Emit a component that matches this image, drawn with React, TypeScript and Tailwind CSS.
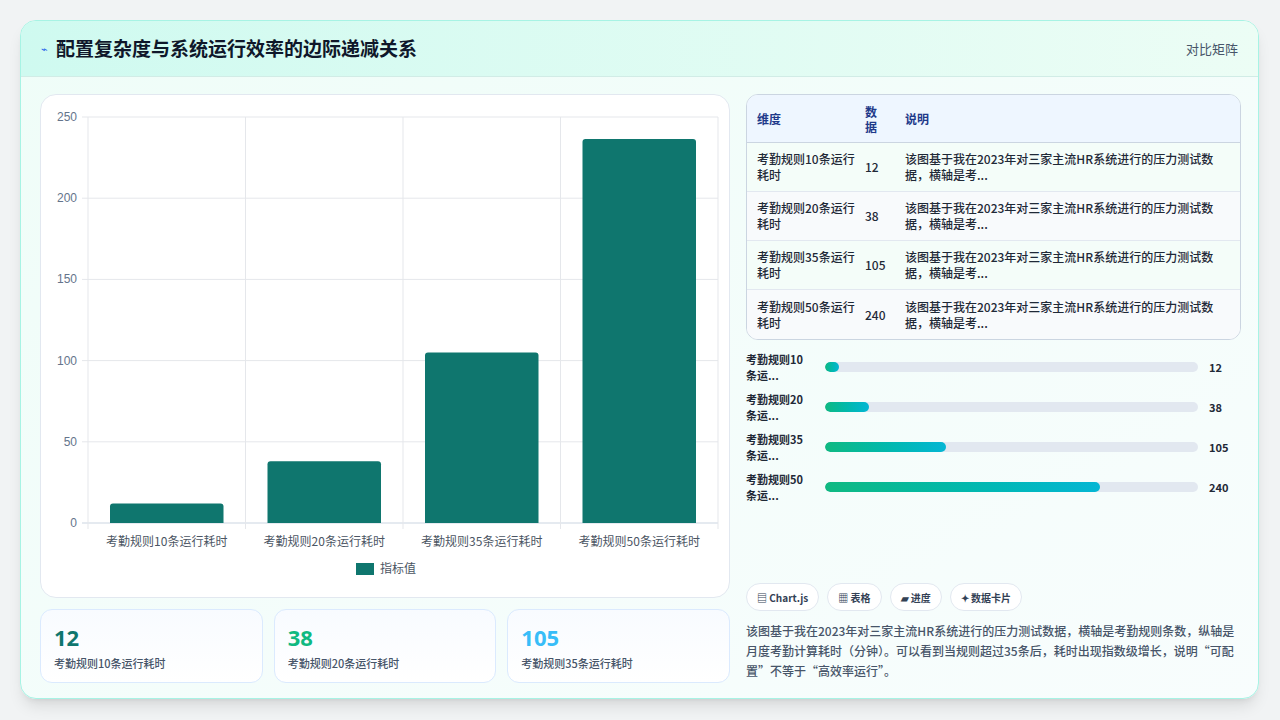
import React from "react";

const data = [
  { k: "考勤规则10条运行耗时", v: 12 },
  { k: "考勤规则20条运行耗时", v: 38 },
  { k: "考勤规则35条运行耗时", v: 105 },
  { k: "考勤规则50条运行耗时", v: 240 },
];
const desc = "该图基于我在2023年对三家主流HR系统进行的压力测试数据，横轴是考...";

function Chart() {
  const x0 = 47, x1 = 677, y0 = 22, y1 = 428;
  const sy = (v: number) => y1 - ((y1 - y0) * v) / 250;
  const cw = (x1 - x0) / 4;
  return (
    <svg width="689" height="503" className="block" style={{ fontFamily: "'Liberation Sans','Noto Sans CJK SC',sans-serif" }}>
      {[0, 50, 100, 150, 200, 250].map((t) => (
        <g key={t}>
          <line x1={x0 - 6} x2={x1} y1={sy(t)} y2={sy(t)} stroke={t === 0 ? "#cbd5e1" : "#e5e7eb"} />
          <text x={x0 - 11} y={sy(t) + 4} fontSize="12" fill="#64748b" textAnchor="end">{t}</text>
        </g>
      ))}
      {[0, 1, 2, 3, 4].map((i) => (
        <line key={i} x1={x0 + cw * i} x2={x0 + cw * i} y1={y0} y2={y1 + 6} stroke="#e5e7eb" />
      ))}
      {data.map((d, i) => {
        const top = sy(d.v > 236 ? 236.5 : d.v);
        return (
          <g key={i}>
            <path d={`M${x0 + cw * i + 22} ${y1} V${top + 3} q0 -3 3 -3 H${x0 + cw * i + cw - 25} q3 0 3 3 V${y1} Z`} fill="#0f766e" />
            <text x={x0 + cw * i + cw / 2} y={y1 + 23} fontSize="12" fill="#4b5563" textAnchor="middle" style={{ fontFamily: "'Noto Sans CJK SC',sans-serif" }}>{d.k}</text>
          </g>
        );
      })}
      <rect x="315" y="468" width="18" height="12" fill="#0f766e" />
      <text x="339" y="478" fontSize="12" fill="#4b5563" style={{ fontFamily: "'Noto Sans CJK SC',sans-serif" }}>指标值</text>
    </svg>
  );
}

export default function App() {
  const colors = ["text-[#0f766e]", "text-[#10b981]", "text-[#38bdf8]"];
  return (
    <div className="w-[1280px] h-[720px] bg-[#f1f3f4] pt-[20px] pl-[20px]" style={{ fontFamily: "'Noto Sans CJK SC','Noto Sans',sans-serif" }}>
      <div className="w-[1239px] h-[679px] rounded-2xl border border-[#a7f3e4] overflow-hidden bg-gradient-to-br from-[#effdf8] to-[#f8fdfd] shadow-lg flex flex-col">
        <div className="h-[56px] shrink-0 flex items-center justify-between px-5 bg-gradient-to-r from-[#cffaf0] to-[#ecfdf5] border-b border-[#d1ece6]">
          <div className="flex items-center gap-2">
            <span className="text-[#2563eb] text-[11px]">⌁</span>
            <span className="text-[19px] font-bold text-[#0f172a]">配置复杂度与系统运行效率的边际递减关系</span>
          </div>
          <span className="text-[13px] text-[#475569] mr-0">对比矩阵</span>
        </div>
        <div className="flex gap-[16px] pl-[19px] pr-[17px] pt-[17px]">
          <div className="w-[690px] flex flex-col gap-[11px]">
            <div className="h-[504px] rounded-2xl border border-[#e2e8f0] bg-white overflow-hidden"><Chart /></div>
            <div className="grid grid-cols-3 gap-[11px]">
              {data.slice(0, 3).map((d, i) => (
                <div key={i} className="h-[74px] rounded-xl border border-[#dbeafe] bg-gradient-to-b from-[#f8fbff] to-white px-[13px] pt-[13px]">
                  <div className={`text-[22px] font-bold leading-[28px] ${colors[i]}`} style={{ fontFamily: "'Open Sans',sans-serif" }}>{d.v}</div>
                  <div className="text-[11px] text-[#475569] font-medium mt-[4px]">{d.k}</div>
                </div>
              ))}
            </div>
          </div>
          <div className="flex-1 flex flex-col">
            <div className="rounded-xl border border-[#cbd5e1] overflow-hidden bg-white">
              <div className="flex h-[48px] items-center bg-[#eef6ff] border-b border-[#cbd5e1] text-[12px] font-semibold text-[#1e3a8a]">
                <div className="w-[118px] pl-[10px]">维度</div>
                <div className="w-[40px] leading-[15px]">数<br />据</div>
                <div className="flex-1">说明</div>
              </div>
              {data.map((d, i) => (
                <div key={i} className={`flex h-[49px] items-center text-[12px] text-[#1f2937] font-medium leading-[16px] ${i < 3 ? "border-b border-[#e2e8f0]" : ""} ${i % 2 ? "bg-[#f8fafc]" : "bg-[#f4fdf9]"}`}>
                  <div className="w-[118px] pl-[10px] pr-2">{d.k.replace("运行耗时", "运行")}<br />耗时</div>
                  <div className="w-[40px]">{d.v}</div>
                  <div className="flex-1 pr-3">该图基于我在2023年对三家主流HR系统进行的压力测试数<br />据，横轴是考...</div>
                </div>
              ))}
            </div>
            <div className="flex flex-col gap-[8px] mt-[11px] h-[232px]">
              {data.map((d, i) => (
                <div key={i} className="flex items-center h-[32px]">
                  <div className="w-[79px] text-[11px] font-bold text-[#1f2937] leading-[16px]">{d.k.slice(0, 6)}<br />条运...</div>
                  <div className="w-[373px] h-[10px] rounded-full bg-[#e2e8f0] overflow-hidden">
                    <div className="h-full rounded-full bg-gradient-to-r from-[#10b981] to-[#06b6d4]" style={{ width: `${(d.v / 325) * 100}%` }} />
                  </div>
                  <div className="ml-[11px] text-[11px] font-bold text-[#1f2937]">{d.v}</div>
                </div>
              ))}
            </div>
            <div className="flex gap-[8px]">
              {["▤ Chart.js", "▦ 表格", "▰ 进度", "✦ 数据卡片"].map((t) => (
                <span key={t} className="h-[28px] px-[10px] flex items-center rounded-full border border-[#e2e8f0] bg-white text-[10px] font-semibold text-[#334155]">{t}</span>
              ))}
            </div>
            <p className="mt-[10px] text-[12px] leading-[20px] font-medium text-[#475569]">该图基于我在2023年对三家主流HR系统进行的压力测试数据，横轴是考勤规则条数，纵轴是月度考勤计算耗时（分钟）。可以看到当规则超过35条后，耗时出现指数级增长，说明“可配置”不等于“高效率运行”。</p>
          </div>
        </div>
      </div>
    </div>
  );
}
